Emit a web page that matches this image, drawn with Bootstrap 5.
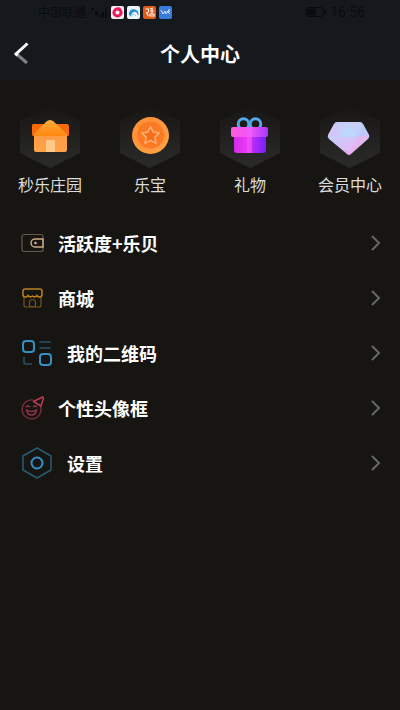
<!DOCTYPE html>
<html lang="zh-CN">
<head>
<meta charset="utf-8">
<meta name="viewport" content="width=device-width, initial-scale=1">
<title>个人中心</title>
<link href="https://cdn.jsdelivr.net/npm/bootstrap@5.3.0/dist/css/bootstrap.min.css" rel="stylesheet">
<style>
body { background: #171512; color: #fff; font-family: "Noto Sans CJK SC", sans-serif; }
.top-area { background: #15191d; }
.status-bar { height: 24px; padding: 0 35px 0 38px; font-size: 12px; line-height: 24px; color: #090c0e; }
.status-time { font-family: Roboto, "Noto Sans CJK SC", sans-serif; font-size: 14px; }
.title-bar { height: 56px; padding-top: 4px; }
.title-bar h1 { font-size: 20px; line-height: 28px; }
.title-side { width: 44px; height: 44px; }
.shortcuts { padding-top: 26px; }
.shortcut { color: #dcdcdc; font-size: 16px; line-height: 24px; }
.shortcut svg { margin-bottom: 4px; }
.menu { padding-top: 19px; }
.menu-row { height: 55px; padding: 0 18px 0 21px; gap: 14px; color: #fff; font-size: 18px; line-height: 28px; }
.menu-row svg { flex: none; }
</style>
</head>
<body>
<header class="top-area">
  <div class="status-bar d-flex align-items-center justify-content-between">
    <div class="d-flex align-items-center">
      <span>中国联通</span>
      <svg class="ms-1 me-1" width="17" height="14" viewBox="0 0 17 14" fill="#090c0e" aria-hidden="true"><path d="M1 3h3v2H1zM5 6h3v4H5zM9 10h2v3H9zM12 7h2v6h-2zM15 4h2v9h-2z"/></svg>
      <svg width="61" height="13" viewBox="0 0 61 13" aria-hidden="true">
        <rect width="13" height="13" rx="2" fill="#f8eef2"/><circle cx="6.500" cy="6.500" r="3.600" fill="none" stroke="#e51b5a" stroke-width="3"/><path d="M6 1l4 1-2 3z" fill="#e51b5a"/>
        <rect x="16" width="13" height="13" rx="2" fill="#edf6fc"/><path d="M18 9a4.800 4.800 0 1 1 9 1q-1-5-4-4-2 0-3 4z" fill="#258fd9"/><path d="M20 11q2-5 5-1" fill="none" stroke="#9bcbed"/>
        <rect x="32" width="13" height="13" rx="2" fill="#df5b17"/><path d="M34.500 3h3v3l-2 1 2 3M39 3l3-1M39 5h4M41 3v5M39 8h4v2h-4z" fill="none" stroke="#fff0e6" stroke-width="1.100"/>
        <rect x="48" width="13" height="13" rx="2" fill="#397bdc"/><path d="M50 4l2 4 2-3 1 3 3-4M56 5l3 3M58 3v3" fill="none" stroke="#d9e9ff"/>
      </svg>
    </div>
    <div class="d-flex align-items-center gap-1">
      <svg width="21" height="12" viewBox="0 0 21 12" aria-hidden="true"><rect x="1" y="1.500" width="17" height="9" rx="2" fill="none" stroke="#090c0e"/><path d="M2 2.500h9v7H2zM19 4h2v4h-2z" fill="#090c0e"/></svg>
      <span class="status-time">16:56</span>
    </div>
  </div>
  <div class="title-bar d-flex align-items-center justify-content-between">
    <button type="button" class="title-side btn p-0 border-0 d-flex align-items-center justify-content-center" aria-label="返回">
      <svg width="16" height="24" viewBox="0 0 16 24" fill="none" stroke-width="3"><path d="M2.500 12l10.500 9" stroke="#7e8082"/><path d="M13.500 1.500L2 12l1.500 1.500" stroke="#fff"/></svg>
    </button>
    <h1 class="m-0 fw-bold">个人中心</h1>
    <span class="title-side"></span>
  </div>
</header>

<main>
  <svg width="0" height="0" class="d-block" aria-hidden="true">
    <defs>
      <linearGradient id="hex" x2="0" y2="1"><stop stop-color="#171614"/><stop offset="1" stop-color="#2b2b2a"/></linearGradient>
      <linearGradient id="wall" x2="0" y2="1"><stop stop-color="#ff9b45"/><stop offset="1" stop-color="#ffa348"/></linearGradient>
      <linearGradient id="roof" x2="0" y2="1"><stop stop-color="#ffad3d"/><stop offset="1" stop-color="#ff870f"/></linearGradient>
      <linearGradient id="coin" x2="1" y2="1"><stop stop-color="#ff8b32"/><stop offset="1" stop-color="#ffa545"/></linearGradient>
      <linearGradient id="box"><stop stop-color="#d12bea"/><stop offset=".45" stop-color="#f13bf8"/><stop offset=".6" stop-color="#b72cf5"/><stop offset="1" stop-color="#7821fa"/></linearGradient>
      <linearGradient id="lid"><stop stop-color="#ff5bdd"/><stop offset=".55" stop-color="#ec55fa"/><stop offset="1" stop-color="#a83afa"/></linearGradient>
      <linearGradient id="gem" x1=".2" x2=".7" y2="1"><stop stop-color="#c9cdf8"/><stop offset=".5" stop-color="#c5cffb"/><stop offset="1" stop-color="#f5a4e9"/></linearGradient>
    </defs>
  </svg>
  <nav class="shortcuts row row-cols-4 g-0 text-center" aria-label="快捷入口">
    <a href="#" class="shortcut col d-flex flex-column align-items-center text-decoration-none">
      <svg width="60" height="62" viewBox="0 0 60 62" aria-hidden="true">
        <path d="M30 0l30 15v32L30 62 0 47V15z" fill="url(#hex)"/>
        <path d="M13 18h34q2 0 2 3v8q0 1-2 1H13q-1 0-1-2v-8q0-2 1-2z" fill="#f96a0b"/>
        <path d="M14 28h33v15q0 3-2 3H16q-2 0-2-2z" fill="url(#wall)"/>
        <path d="M30 14q1 0 3 1l14 13q-1 2-3 2H16q-3 0-2-2l13-13q2-1 3-1z" fill="url(#roof)"/>
        <path d="M26 34h9v12h-9z" fill="#ffca88"/>
      </svg>
      <span>秒乐庄园</span>
    </a>
    <a href="#" class="shortcut col d-flex flex-column align-items-center text-decoration-none">
      <svg width="60" height="62" viewBox="0 0 60 62" aria-hidden="true">
        <path d="M30 0l30 15v32L30 62 0 47V15z" fill="url(#hex)"/>
        <circle cx="30.500" cy="29.500" r="18.500" fill="url(#coin)"/>
        <circle cx="30.500" cy="29" r="14" fill="#fb7a22" stroke="#ff9548"/>
        <path d="M30.500 20.500l2.700 5.600 6.100.8-4.500 4.200 1.200 6.200-5.500-3-5.500 3 1.200-6.200-4.500-4.200 6.100-.8z" fill="#f76e18" stroke="#ffb079" stroke-width="1.500" stroke-linejoin="round"/>
      </svg>
      <span>乐宝</span>
    </a>
    <a href="#" class="shortcut col d-flex flex-column align-items-center text-decoration-none">
      <svg width="60" height="62" viewBox="0 0 60 62" aria-hidden="true">
        <path d="M30 0l30 15v32L30 62 0 47V15z" fill="url(#hex)"/>
        <g fill="none" stroke="#56a7e9" stroke-width="3"><circle cx="23.500" cy="18" r="5.300"/><circle cx="35.500" cy="18" r="5.300"/></g>
        <path d="M14 28h32v16q0 3-3 3H17q-3 0-3-3z" fill="url(#box)"/>
        <rect x="11" y="21" width="37" height="10" rx="2" fill="url(#lid)"/>
        <path d="M27 21h5v26h-5z" fill="#ff67f8" opacity=".4"/>
      </svg>
      <span>礼物</span>
    </a>
    <a href="#" class="shortcut col d-flex flex-column align-items-center text-decoration-none">
      <svg width="60" height="62" viewBox="0 0 60 62" aria-hidden="true">
        <path d="M30 0l30 15v32L30 62 0 47V15z" fill="url(#hex)"/>
        <path d="M18 16h22q2 0 3 2l6 11q1 2-1 4L31 48q-2 2-4 0L9 33q-2-2-1-4l6-11q1-2 3-2z" fill="url(#gem)"/>
        <path d="M14 18l7 13-13-2zM21 31l8 17-19-15z" fill="#dcbef5" opacity=".5"/>
        <path d="M21 31l8-14 8 14z" fill="#b5ddfa" opacity=".6"/>
        <path d="M21 31h16l-8 17z" fill="#dfbff8" opacity=".6"/>
        <path d="M37 31l12-2-18 18-2 1z" fill="#eeb0ef" opacity=".6"/>
        <path d="M43 18l6 11-12 2z" fill="#b4c8fb" opacity=".6"/>
      </svg>
      <span>会员中心</span>
    </a>
  </nav>

  <nav class="menu d-flex flex-column" aria-label="个人中心菜单">
    <a href="#" class="menu-row d-flex align-items-center text-decoration-none fw-bold">
      <svg width="23" height="20" viewBox="0 0 23 20" fill="none" aria-hidden="true"><rect x="1" y="1.500" width="21" height="17" rx="2" stroke="#66584a" stroke-width="1.200"/><path d="M22 6h-8a4 4 0 0 0 0 8h8z" stroke="#c9aa86" stroke-width="1.500"/><circle cx="14.500" cy="10" r="1.300" fill="#d3b48f"/></svg>
      <span class="flex-grow-1">活跃度+乐贝</span>
      <svg width="12" height="18" viewBox="0 0 12 18" fill="none" stroke="#66676a" stroke-width="2" aria-hidden="true"><path d="M2 2l7 7-7 7"/></svg>
    </a>
    <a href="#" class="menu-row d-flex align-items-center text-decoration-none fw-bold">
      <svg width="23" height="20" viewBox="0 0 23 20" fill="none" aria-hidden="true"><path d="M3 9v8q0 2 2 2h13q2 0 2-2V9M8.500 18v-3.500a3 3 0 0 1 6 0V18M8 18.500h7" stroke="#76521f" stroke-width="1.200"/><path d="M4 1h15q1.500 0 2 1.500v4q0 2.500-2.500 2.500-2 0-2.500-1.500Q14 10 11.500 8 9 10 7 7.500 6.500 9 4.500 9 2 9 2 6.500v-4Q2.500 1 4 1z" stroke="#bd821f" stroke-width="1.500"/></svg>
      <span class="flex-grow-1">商城</span>
      <svg width="12" height="18" viewBox="0 0 12 18" fill="none" stroke="#66676a" stroke-width="2" aria-hidden="true"><path d="M2 2l7 7-7 7"/></svg>
    </a>
    <a href="#" class="menu-row d-flex align-items-center text-decoration-none fw-bold">
      <svg width="32" height="28" viewBox="0 0 32 28" fill="none" aria-hidden="true"><g stroke="#348fc5" stroke-width="2"><rect x="2" y="2" width="11" height="11" rx="3"/><rect x="19" y="15" width="11" height="11" rx="3"/></g><path d="M18.500 3h11M18.500 9h11M3 18v5q0 2 2 2h6" stroke="#29536b" stroke-width="1.500"/></svg>
      <span class="flex-grow-1">我的二维码</span>
      <svg width="12" height="18" viewBox="0 0 12 18" fill="none" stroke="#66676a" stroke-width="2" aria-hidden="true"><path d="M2 2l7 7-7 7"/></svg>
    </a>
    <a href="#" class="menu-row d-flex align-items-center text-decoration-none fw-bold">
      <svg width="23" height="26" viewBox="0 0 23 26" fill="none" aria-hidden="true"><path d="M19.500 11a9.500 9.500 0 1 1-7.500-6" stroke="#7d2b37" stroke-width="1.400"/><path d="M12.500 6.500l9-4.500q1 0 1 1L20 11z" stroke="#bb3c54" stroke-width="1.500" stroke-linejoin="round"/><path d="M5 12q2-2 4 0M12 12q2-2 4 0" stroke="#943548" stroke-width="1.300"/><path d="M5.500 15q1 5 5 5t5-5q-5 3-10 0z" stroke="#943548" stroke-width="1.300"/></svg>
      <span class="flex-grow-1">个性头像框</span>
      <svg width="12" height="18" viewBox="0 0 12 18" fill="none" stroke="#66676a" stroke-width="2" aria-hidden="true"><path d="M2 2l7 7-7 7"/></svg>
    </a>
    <a href="#" class="menu-row d-flex align-items-center text-decoration-none fw-bold">
      <svg width="32" height="34" viewBox="0 0 32 34" fill="none" aria-hidden="true"><path d="M16 2l14 8v14l-14 8-14-8V10z" stroke="#285b74" stroke-width="1.500" stroke-linejoin="round"/><circle cx="16" cy="17" r="5.500" stroke="#348fc5" stroke-width="2"/></svg>
      <span class="flex-grow-1">设置</span>
      <svg width="12" height="18" viewBox="0 0 12 18" fill="none" stroke="#66676a" stroke-width="2" aria-hidden="true"><path d="M2 2l7 7-7 7"/></svg>
    </a>
  </nav>
</main>
<script src="https://cdn.jsdelivr.net/npm/bootstrap@5.3.0/dist/js/bootstrap.bundle.min.js"></script>
</body>
</html>
